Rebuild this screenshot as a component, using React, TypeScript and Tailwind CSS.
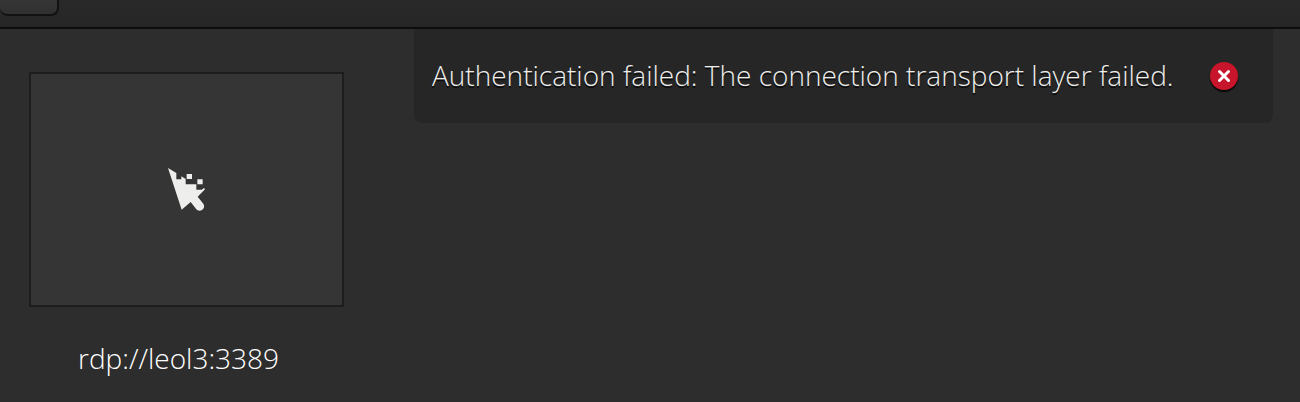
import { useState } from 'react';

function RemoteCursorIcon() {
  return (
    <svg viewBox="51 36 120 135" className="h-[45px] w-10" aria-hidden="true">
      <path
        d="M54 39 L79 54 V73 H94 V64 L107 72 V88 H139 V104 H155 L162 99 L165 103 L143 125 L160 146 C164 152 163 160 157 164 C151 169 143 168 139 163 L122 141 L95 164 Z"
        fill="#eeeeec"
      />
      <path d="M110 57h16v15h-16z M142 73h16v15h-16z" fill="#eeeeec" />
    </svg>
  );
}

function Connection({ name }: { name: string }) {
  return (
    <figure className="flex w-[315px] shrink-0 flex-col items-center pt-[43px]">
      <div className="flex h-[235px] w-full items-center justify-center border-2 border-[#1d1d1d] bg-[#353535]">
        <RemoteCursorIcon />
      </div>
      <figcaption className="mt-8 mr-4 text-[28px] leading-[38px] text-white">{name}</figcaption>
    </figure>
  );
}

function ErrorBanner({ message, onClose }: { message: string; onClose: () => void }) {
  return (
    <div
      role="alert"
      className="flex h-[94px] min-w-0 flex-1 items-center justify-between rounded-b-lg bg-[#262626] pr-[35px] pl-[18px]"
    >
      <p className="pb-0.5 text-[28px] leading-[38px] whitespace-nowrap text-[#eeeeec] [text-shadow:0_2px_#0c0c0c]">
        {message}
      </p>
      <button
        type="button"
        aria-label="Close"
        onClick={onClose}
        className="flex size-7 shrink-0 items-center justify-center rounded-full bg-[#c7162b] shadow-[0_2px_1px_#080808]"
      >
        <svg viewBox="0 0 28 28" className="size-7" fill="none" stroke="#fff" strokeWidth="3" strokeLinecap="round">
          <path d="M9.5 9.5l9 9M18.5 9.5l-9 9" />
        </svg>
      </button>
    </div>
  );
}

export default function App() {
  const [error, setError] = useState('Authentication failed: The connection transport layer failed.');

  return (
    <div className="flex min-h-screen flex-col bg-[#2d2d2d] font-['Open_Sans','Noto_Sans',sans-serif] font-light">
      <header className="flex h-[29px] items-start border-b-2 border-[#0d0d0d] bg-linear-to-b from-[#292929] to-[#262626]">
        <button
          type="button"
          aria-label="Menu"
          className="h-4 w-[59px] rounded-b-lg border-r-2 border-b-2 border-[#111] bg-linear-to-b from-[#353535] to-[#303030]"
        />
      </header>
      <main className="flex flex-1 items-start gap-[70px] pr-[27px] pl-[29px]">
        <Connection name="rdp://leol3:3389" />
        {error && <ErrorBanner message={error} onClose={() => setError('')} />}
      </main>
    </div>
  );
}
